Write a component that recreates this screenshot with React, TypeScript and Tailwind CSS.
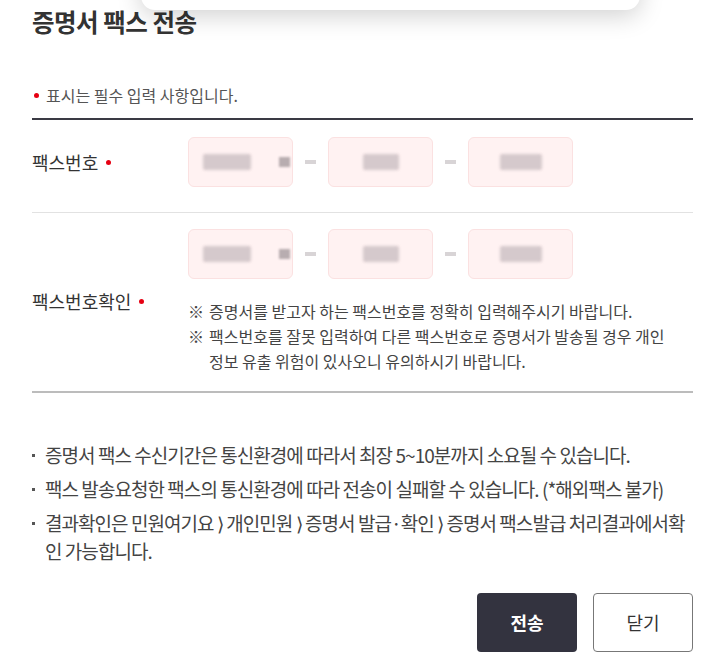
import React from 'react';

const font = { fontFamily: '"Noto Sans CJK KR", "Noto Sans", sans-serif' };

function Blob({ w }: { w: string }) {
  return <div className={`${w} h-[16px] rounded-[2px] bg-[#b9aeb3]/60 blur-[1.5px]`} />;
}

function FaxInputs() {
  return (
    <div className="flex items-center">
      <div className="flex h-[50px] w-[105px] items-center justify-between rounded-[6px] border border-[#fbe1e1] bg-[#fff2f2] pl-[14px] pr-[2px]">
        <Blob w="w-[48px]" />
        <div className="h-[10px] w-[11px] bg-[#9a9094]/70 blur-[1px]" />
      </div>
      <div className="flex w-[35px] justify-center">
        <div className="h-[4px] w-[11px] bg-[#d8d4d6] blur-[0.5px]" />
      </div>
      <div className="flex h-[50px] w-[105px] items-center justify-center rounded-[6px] border border-[#fbe1e1] bg-[#fff2f2]">
        <Blob w="w-[36px]" />
      </div>
      <div className="flex w-[35px] justify-center">
        <div className="h-[4px] w-[11px] bg-[#d8d4d6] blur-[0.5px]" />
      </div>
      <div className="flex h-[50px] w-[105px] items-center justify-center rounded-[6px] border border-[#fbe1e1] bg-[#fff2f2]">
        <Blob w="w-[42px]" />
      </div>
    </div>
  );
}

function Label({ text }: { text: string }) {
  return (
    <div className="flex w-[156px] shrink-0 items-center text-[18px] text-[#333]">
      {text}
      <span className="ml-[8px] inline-block h-[5px] w-[5px] rounded-full bg-[#e60012]" />
    </div>
  );
}

const guides = [
  '증명서 팩스 수신기간은 통신환경에 따라서 최장 5~10분까지 소요될 수 있습니다.',
  '팩스 발송요청한 팩스의 통신환경에 따라 전송이 실패할 수 있습니다. (*해외팩스 불가)',
  '결과확인은 민원여기요 ⟩ 개인민원 ⟩ 증명서 발급·확인 ⟩ 증명서 팩스발급 처리결과에서확인 가능합니다.',
];

export default function App() {
  return (
    <div className="relative h-[666px] w-[717px] overflow-hidden bg-white pl-[32px] pr-[24px]" style={font}>
      <div className="absolute left-[141px] top-[-40px] h-[50px] w-[499px] rounded-[14px] bg-white shadow-[0_6px_24px_rgba(0,0,0,0.18)]" />

      <h1 className="pt-[6px] text-[24.5px] font-bold leading-[32px] tracking-[-0.02em] text-[#333]">증명서 팩스 전송</h1>

      <p className="mt-[47px] flex items-center text-[16px] leading-[20px] text-[#555]">
        <span className="ml-[2px] mr-[7px] inline-block h-[5px] w-[5px] rounded-full bg-[#e60012]" />
        표시는 필수 입력 사항입니다.
      </p>

      <div className="mt-[13px] border-t-2 border-[#3a3a44]">
        <div className="flex items-center border-b border-[#e2e2e2] pb-[25px] pt-[17px]">
          <Label text="팩스번호" />
          <FaxInputs />
        </div>

        <div className="flex items-center border-b-2 border-[#bcbcbc] pb-[17px] pt-[16px]">
          <Label text="팩스번호확인" />
          <div className="flex flex-col">
            <FaxInputs />
            <ul className="mt-[20px] text-[16px] leading-[25px] text-[#444]">
              <li className="flex">
                <span className="w-[21px] shrink-0">※</span>
                <span className="whitespace-nowrap">증명서를 받고자 하는 팩스번호를 정확히 입력해주시기 바랍니다.</span>
              </li>
              <li className="flex">
                <span className="w-[21px] shrink-0">※</span>
                <span className="w-[458px]">팩스번호를 잘못 입력하여 다른 팩스번호로 증명서가 발송될 경우 개인 정보 유출 위험이 있사오니 유의하시기 바랍니다.</span>
              </li>
            </ul>
          </div>
        </div>
      </div>

      <ul className="mt-[48px] flex flex-col gap-[6px] text-[19px] leading-[28px] tracking-[-0.05em] text-[#444]">
        {guides.map((g) => (
          <li key={g} className="flex">
            <span className="flex h-[28px] w-[13px] shrink-0 items-center">
              <span className="h-[3px] w-[3px] bg-[#555]" />
            </span>
            <span className="w-[648px] break-all">{g}</span>
          </li>
        ))}
      </ul>

      <div className="mt-[28px] flex justify-end gap-[16px]">
        <button className="h-[59px] w-[100px] rounded-[4px] bg-[#33333f] text-[18px] font-bold text-white">전송</button>
        <button className="h-[59px] w-[100px] rounded-[4px] border border-[#777] bg-white text-[18px] text-[#333]">닫기</button>
      </div>
    </div>
  );
}
